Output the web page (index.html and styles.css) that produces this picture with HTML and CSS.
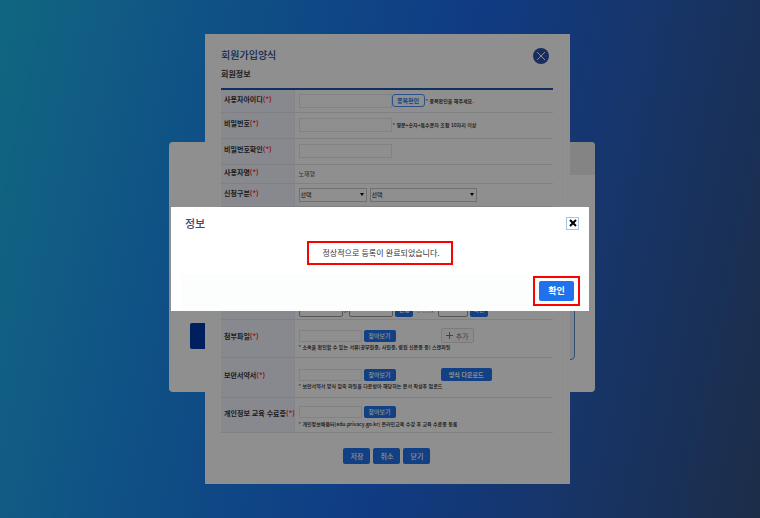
FILE: index.html
```
<!DOCTYPE html>
<html lang="ko">
<head>
    <meta charset="UTF-8">
    <title>회원가입양식</title>
    <link rel="stylesheet" href="styles.css">
</head>
<body>
    <!-- Login card behind the popup -->
    <div class="login-card">
        <div class="login-tab"></div>
        <div class="login-body">
            <div class="login-block"></div>
            <div class="login-panel"></div>
        </div>
    </div>

    <form class="popup">
        <div class="popup-content">
            <div class="popup-header">
                <h1>회원가입양식</h1>
                <button type="button" class="popup-close" aria-label="닫기">
                    <svg viewBox="0 0 16 16" width="16" height="16">
                        <circle cx="8" cy="8" r="8" fill="#2d52a8"/>
                        <path d="M4 4l8 8M12 4l-8 8" stroke="#fff" stroke-width="1"/>
                    </svg>
                </button>
            </div>
            <h2>회원정보</h2>

            <table class="form-table">
                <tr class="row-id">
                    <th><label for="userId">사용자아이디<em>(*)</em></label></th>
                    <td>
                        <div class="field">
                            <input type="text" id="userId" class="text-input">
                            <button type="button" class="btn-outline">중복확인</button>
                            <span class="note">* 중복확인을 해주세요.</span>
                        </div>
                    </td>
                </tr>
                <tr class="row-password">
                    <th><label for="password">비밀번호<em>(*)</em></label></th>
                    <td>
                        <div class="field">
                            <input type="password" id="password" class="text-input">
                            <span class="note">* 영문+숫자+특수문자 조합 10자리 이상</span>
                        </div>
                    </td>
                </tr>
                <tr class="row-password">
                    <th><label for="passwordCheck">비밀번호확인<em>(*)</em></label></th>
                    <td>
                        <div class="field">
                            <input type="password" id="passwordCheck" class="text-input">
                        </div>
                    </td>
                </tr>
                <tr class="row-name">
                    <th>사용자명<em>(*)</em></th>
                    <td><span class="user-name">노재형</span></td>
                </tr>
                <tr class="row-type">
                    <th><label for="applyType">신청구분<em>(*)</em></label></th>
                    <td>
                        <div class="field field-select">
                            <div class="select-wrap">
                                <select id="applyType"><option>선택</option></select>
                            </div>
                            <div class="select-wrap select-wide">
                                <select aria-label="신청구분 상세"><option>선택</option></select>
                            </div>
                        </div>
                    </td>
                </tr>
                <tr class="row-org">
                    <th></th>
                    <td></td>
                </tr>
                <tr class="row-mail">
                    <th></th>
                    <td>
                        <div class="field field-mail">
                            <input type="text" class="mail-input" aria-label="이메일">
                            <span>@</span>
                            <input type="text" class="mail-input" aria-label="이메일 도메인">
                            <button type="button" class="btn btn-mini">인증</button>
                            <span class="code-label">인증번호</span>
                            <input type="text" class="code-input" aria-label="인증번호">
                            <button type="button" class="btn btn-mini">확인</button>
                        </div>
                    </td>
                </tr>
                <tr class="row-file">
                    <th><label for="attachFile">첨부파일<em>(*)</em></label></th>
                    <td>
                        <div class="field field-file">
                            <input type="text" id="attachFile" class="file-input">
                            <button type="button" class="btn btn-file">찾아보기</button>
                            <button type="button" class="btn-add">
                                <svg viewBox="0 0 7 7" width="7" height="7" fill="#ff3b47"><path d="M3 0h1v3h3v1H4v3H3V4H0V3h3z"/></svg>
                                추가
                            </button>
                        </div>
                        <p class="note">* 소속을 확인할 수 있는 서류(공무원증, 사원증, 병원 신분증 등) 스캔파일</p>
                    </td>
                </tr>
                <tr class="row-pledge">
                    <th><label for="pledgeFile">보안서약서<em>(*)</em></label></th>
                    <td>
                        <div class="field field-file">
                            <input type="text" id="pledgeFile" class="file-input">
                            <button type="button" class="btn btn-file">찾아보기</button>
                            <button type="button" class="btn btn-download">양식 다운로드</button>
                        </div>
                        <p class="note">* 보안서약서 양식 압축 파일을 다운받아 해당하는 문서 작성후 업로드</p>
                    </td>
                </tr>
                <tr class="row-education">
                    <th><label for="educationFile">개인정보 교육 수료증<em>(*)</em></label></th>
                    <td>
                        <div class="field field-file">
                            <input type="text" id="educationFile" class="file-input">
                            <button type="button" class="btn btn-file">찾아보기</button>
                        </div>
                        <p class="note">* 개인정보배움터(edu.privacy.go.kr) 온라인교육 수강 후 교육 수료증 등록</p>
                    </td>
                </tr>
            </table>

            <div class="popup-buttons">
                <button type="button" class="btn">저장</button>
                <button type="button" class="btn">취소</button>
                <button type="button" class="btn">닫기</button>
            </div>
        </div>
    </form>

    <div class="dimmer"></div>

    <div class="dialog" role="dialog" aria-labelledby="dialogTitle">
        <div class="dialog-header">
            <h2 id="dialogTitle">정보</h2>
            <button type="button" class="dialog-close" aria-label="닫기">
                <svg viewBox="0 0 8 8" width="8" height="8"><path d="M1 1l6 6M7 1l-6 6" stroke="#000" stroke-width="2"/></svg>
            </button>
        </div>
        <p class="dialog-message">정상적으로 등록이 완료되었습니다.</p>
        <div class="dialog-footer">
            <div class="confirm-mark">
                <button type="button" class="btn btn-confirm">확인</button>
            </div>
        </div>
    </div>
</body>
</html>
```
FILE: styles.css
```
* {
    box-sizing: border-box;
}

/* All layers share one grid cell and stack in source order */
body {
    margin: 0;
    min-height: 100vh;
    display: grid;
    grid-template: 1fr / 1fr;
    place-items: center;
    font-family: "Noto Sans CJK KR", "Noto Sans", sans-serif;
    font-size: 7px;
    line-height: 10px;
    color: #333;
    background: linear-gradient(102deg, #1db7e4 0%, #20a3ec 13%, #1b8fee 26%, #1d6bec 54%, #2960bf 75%, #325080 100%);
}

body > * {
    grid-area: 1 / 1;
}

h1, h2, p {
    margin: 0;
}

button, input, select {
    font-family: inherit;
    font-size: 6px;
    line-height: 8px;
    margin: 0;
    padding: 0;
}

svg {
    display: block;
}

/* Login card */
.login-card {
    width: 56%;
    min-height: 250px;
    margin: 16px 0 0 4px;
    display: flex;
    flex-direction: column;
    background: #fff;
    border-radius: 4px;
    overflow: hidden;
}

.login-tab {
    width: 50%;
    height: 33px;
    margin-left: auto;
    background: #ececec;
}

.login-body {
    flex: 1;
    display: flex;
    justify-content: space-between;
    align-items: flex-end;
    padding: 0 20px 32px 21px;
}

.login-block {
    width: 60px;
    height: 26px;
    margin-bottom: 11px;
    background: #0038a8;
    border-radius: 2px;
}

.login-panel {
    width: 40%;
    height: 120px;
    border: 1px solid #5f93d0;
    border-radius: 4px;
    background: #e9f1fb;
}

/* Sign-up popup */
.popup {
    width: 48%;
    min-height: 450px;
    margin-left: 15px;
    padding: 12px 7px;
    background: #fff;
}

.popup-content {
    padding: 0 9px;
    border-right: 1px solid #f9f9f9;
}

.popup-header {
    display: flex;
    justify-content: space-between;
    align-items: center;
    height: 20px;
    padding-right: 4px;
}

.popup-header h1 {
    font-size: 10px;
    line-height: 16px;
    font-weight: 500;
    padding-bottom: 2px;
    color: #234a96;
}

.popup-close {
    border: none;
    background: none;
}

.popup-content h2 {
    font-size: 8px;
    line-height: 12px;
    font-weight: 700;
    margin: 2px 0 8px;
}

/* Form table */
.form-table {
    width: 100%;
    border-collapse: collapse;
    border-top: 2px solid #1c57ab;
    table-layout: fixed;
}

.form-table th {
    width: 22%;
    padding: 0 0 4px 3px;
    text-align: left;
    font-weight: 700;
    white-space: nowrap;
    background: #f3f5ff;
    border-right: 1px solid #eceef6;
}

.form-table td {
    padding: 0 0 0 4px;
}

.form-table th,
.form-table td {
    border-bottom: 1px solid #e6e7ec;
}

.form-table em {
    font-style: normal;
    color: #ff1f1f;
}

.row-id { height: 23px; }
.row-password { height: 26px; }
.row-name { height: 19px; }
.row-type { height: 23px; }
.row-org { height: 90px; }
.row-mail { height: 23px; }
.row-file { height: 38px; }
.row-pledge { height: 40px; }
.row-education { height: 35px; }

.row-file td,
.row-pledge td,
.row-education td {
    padding-top: 3px;
}

.field {
    display: flex;
    align-items: center;
}

.text-input,
.file-input {
    height: 14px;
    border: 1px solid #e8e8e8;
    background: #fff;
}

.text-input {
    width: 93px;
}

.file-input {
    width: 63px;
    height: 12px;
}

.note {
    font-size: 5px;
    line-height: 8px;
    font-weight: 500;
    color: #222;
    white-space: nowrap;
}

.field .note {
    padding-left: 1px;
}

.user-name {
    font-size: 6px;
    color: #555;
}

.field-select {
    gap: 3px;
}

/* Arrow is drawn over the select in the same cell */
.select-wrap {
    display: grid;
    align-items: center;
    width: 68px;
}

.select-wide {
    width: 107px;
}

.select-wrap select,
.select-wrap::after {
    grid-area: 1 / 1;
}

.select-wrap select {
    width: 100%;
    height: 14px;
    padding: 0 1px;
    border: 1px solid #c8c8c8;
    color: #222;
    appearance: none;
    background: #fff;
}

.select-wrap::after {
    content: "";
    justify-self: end;
    margin-right: 3px;
    border: 2px solid transparent;
    border-top: 3px solid #000;
    border-bottom: none;
    pointer-events: none;
}

.field-mail {
    gap: 2px;
    padding-top: 4px;
    font-size: 5px;
}

.field-mail span {
    margin: 0 -1px;
}

.mail-input,
.code-input {
    width: 44px;
    height: 14px;
    border: 1px solid #999;
    border-radius: 2px;
}

.code-input {
    width: 30px;
}

.code-label {
    padding: 0 2px;
    color: #888;
}

/* Buttons */
.btn {
    border: none;
    border-radius: 2px;
    background: #2072ec;
    color: #fff;
    font-weight: 500;
}

.btn-outline {
    width: 33px;
    height: 13px;
    border: 1px solid #4c90f4;
    border-radius: 3px;
    background: #fff;
    color: #2072ec;
    font-weight: 700;
}

.btn-mini {
    width: 18px;
    height: 14px;
}

.field-file {
    gap: 2px;
    height: 15px;
}

.btn-file {
    width: 32px;
    height: 12px;
    margin-right: 43px;
}

.btn-add {
    display: flex;
    align-items: center;
    justify-content: center;
    gap: 3px;
    width: 33px;
    height: 15px;
    border: 1px solid #dcdcdc;
    border-radius: 2px;
    background: #fafafa;
    color: #777;
    font-size: 7px;
}

.btn-download {
    width: 51px;
    height: 13px;
    font-weight: 700;
}

.popup-buttons {
    display: flex;
    justify-content: center;
    gap: 3px;
    padding: 15px 0 7px;
}

.popup-buttons .btn {
    width: 27px;
    height: 16px;
    font-size: 7px;
}

.dimmer {
    place-self: stretch;
    background: rgba(0, 0, 0, 0.44);
}

/* Result dialog */
.dialog {
    width: 55%;
    background: #fff;
}

.dialog-header {
    display: flex;
    justify-content: space-between;
    align-items: center;
    height: 32px;
    padding: 0 10px 0 14px;
}

.dialog-header h2 {
    font-size: 11px;
    line-height: 16px;
    font-weight: 500;
    color: #45456f;
}

.dialog-close {
    display: grid;
    place-items: center;
    width: 13px;
    height: 13px;
    border: 1px solid #9cc8f5;
    background: #fff;
}

.dialog-message {
    width: fit-content;
    margin: 2px auto 9px;
    padding: 5px 11px 5px 13px;
    border: 2px solid #f00;
    font-size: 8px;
    line-height: 10px;
}

.dialog-footer {
    display: flex;
    justify-content: flex-end;
    margin-left: 10px;
    padding: 2px 9px 5px 0;
    background: #fcfefe;
}

.confirm-mark {
    padding: 3px 4px;
    border: 2px solid #f00;
}

.btn-confirm {
    display: block;
    width: 35px;
    height: 20px;
    font-size: 9px;
    font-weight: 700;
}
```
